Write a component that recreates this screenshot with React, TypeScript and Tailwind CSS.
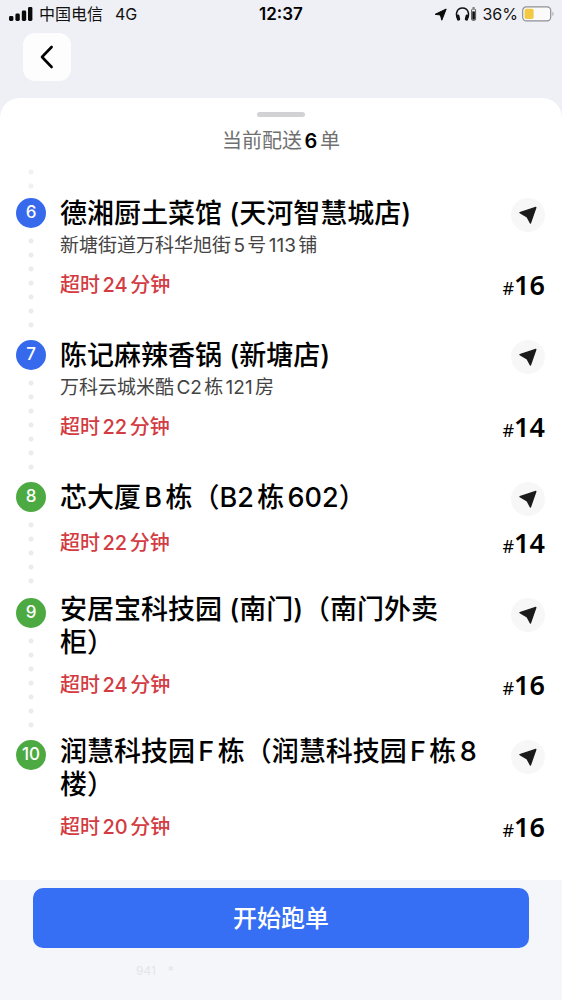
interface Stop {
    no: number;
    kind: 'pickup' | 'dropoff';
    title: string;
    address?: string;
    late: number;
    order: number;
}

const stops: Stop[] = [
    { no: 6, kind: 'pickup', title: '德湘厨土菜馆 (天河智慧城店)', address: '新塘街道万科华旭街5号113铺', late: 24, order: 16 },
    { no: 7, kind: 'pickup', title: '陈记麻辣香锅 (新塘店)', address: '万科云城米酷C2栋121房', late: 22, order: 14 },
    { no: 8, kind: 'dropoff', title: '芯大厦B栋（B2栋602）', late: 22, order: 14 },
    { no: 9, kind: 'dropoff', title: '安居宝科技园 (南门)（南门外卖柜）', late: 24, order: 16 },
    { no: 10, kind: 'dropoff', title: '润慧科技园F栋（润慧科技园F栋8楼）', late: 20, order: 16 },
];

function StatusBar() {
    return (
        <div className="grid grid-cols-3 items-center h-7 pl-2 pr-2 text-base leading-7 text-[#111]">
            <div className="flex items-center gap-1.5">
                <svg className="w-[25px] h-[14px]" viewBox="0 0 25 14" fill="#0a0a0a">
                    <rect x="1" y="9" width="4.4" height="5" rx="1.4" />
                    <rect x="7.4" y="6.5" width="4.4" height="7.5" rx="1.4" />
                    <rect x="13.8" y="3.5" width="4.4" height="10.5" rx="1.4" />
                    <rect x="20" y="0" width="4.4" height="14" rx="1.4" />
                </svg>
                <span>中国电信</span>
                <span className="ml-1.5">4G</span>
            </div>
            <div className="text-center text-[17px] font-semibold text-black">12:37</div>
            <div className="flex items-center justify-end">
                <svg className="w-[13px] h-[13px] mr-2 shrink-0" viewBox="0 0 13 13" fill="#0a0a0a" stroke="#0a0a0a" strokeWidth="1" strokeLinejoin="round">
                    <path d="M1.2 6.3 12.2 1 7.8 12.2 6.4 7Z" />
                </svg>
                <svg className="w-[23px] h-[14px] mr-1 shrink-0" viewBox="0 0 23 14" fill="none">
                    <path d="M3.2 12.2C.2 8.6 1 1 7.5 1s7.3 7.6 4.3 11.2" stroke="#111" strokeWidth="1.5" />
                    <rect x="1.6" y="7.6" width="3.2" height="6" rx="1.3" fill="#111" transform="rotate(-14 3.2 10.6)" />
                    <rect x="10.2" y="7.6" width="3.2" height="6" rx="1.3" fill="#111" transform="rotate(14 11.8 10.6)" />
                    <rect x="16.6" y="2.1" width="4" height="11.2" rx="1" stroke="#555" strokeWidth="1" />
                    <rect x="17.5" y="0.2" width="2.2" height="1.2" rx=".4" fill="#555" />
                    <rect x="17.3" y="4.4" width="2.6" height="8.2" fill="#111" />
                </svg>
                <span className="mr-1">36%</span>
                <svg className="w-8 h-4 shrink-0" viewBox="0 0 32 16">
                    <rect x=".7" y=".9" width="28" height="14" rx="3.6" fill="#fafafa" stroke="#8f9092" strokeWidth="1.2" />
                    <rect x="2.6" y="2.8" width="9" height="10.2" rx="1.8" fill="#f3c944" />
                    <path d="M30.6 5.8v4.4c1.2-.5 1.2-3.9 0-4.4Z" fill="#8f9092" />
                </svg>
            </div>
        </div>
    );
}

function StopRow({ stop, last }: { stop: Stop; last: boolean }) {
    return (
        <li className="flex gap-3.5">
            <div className="flex flex-col w-[30px] shrink-0">
                <span
                    className={`flex items-center justify-center h-[30px] mt-[5px] rounded-full text-[17px] font-medium text-white ${stop.kind === 'pickup' ? 'bg-[#3769ed]' : 'bg-[#4daa43]'}`}
                >
                    {stop.no}
                </span>
                {!last && (
                    <span className="flex-1 mt-1.5 bg-[radial-gradient(circle,#ebecee_2px,transparent_3px)] bg-[length:30px_14px] bg-repeat-y" />
                )}
            </div>
            <div className="flex-1 min-w-0 pb-9">
                <div className="flex items-start gap-6">
                    <div className="flex-1 min-w-0">
                        <div className="flex items-center min-h-10">
                            <h2 className="text-[27px] leading-[33px] font-medium text-black [text-spacing-trim:space-all]">{stop.title}</h2>
                        </div>
                        {stop.address && (
                            <p className="text-[19px] leading-[26px] text-[#444]">{stop.address}</p>
                        )}
                    </div>
                    <button
                        type="button"
                        aria-label="导航"
                        className="flex items-center justify-center size-[34px] mt-[5px] shrink-0 rounded-full bg-[#f7f7f8]"
                    >
                        <svg className="size-[18px]" viewBox="0 0 18 18" fill="#1b1b1b" stroke="#1b1b1b" strokeWidth="1.4" strokeLinejoin="round">
                            <path d="M1 6.6 16.8 1.4 11.4 17 8.2 11Z" />
                        </svg>
                    </button>
                </div>
                <div className="flex items-center justify-between h-7 mt-3">
                    <span className="text-xl leading-7 font-medium text-[#d23c42]">超时{stop.late}分钟</span>
                    <span className="flex items-baseline text-black font-['Noto_Sans','Noto_Sans_CJK_SC',sans-serif]">
                        <span className="text-lg">#</span>
                        <span className="text-[27px] leading-8 font-semibold">{stop.order}</span>
                    </span>
                </div>
            </div>
        </li>
    );
}

export default function App() {
    return (
        <div
            lang="zh-CN"
            className="flex flex-col min-h-screen bg-[#eff0f5] font-['Inter','Noto_Sans_CJK_SC',sans-serif] [text-autospace:normal]"
        >
            <StatusBar />
            <header className="px-[23px] pt-[5px] pb-[17px]">
                <button
                    type="button"
                    aria-label="返回"
                    className="flex items-center justify-center size-12 rounded-xl bg-[#fdfdfe]"
                >
                    <svg className="w-[14px] h-6" viewBox="0 0 14 24" fill="none" stroke="#000" strokeWidth="2.6" strokeLinecap="round" strokeLinejoin="round">
                        <path d="M11.6 2 2 12l9.6 10" />
                    </svg>
                </button>
            </header>

            <main className="flex-1 rounded-t-[20px] bg-white pt-3.5">
                <div className="w-12 h-[5px] mx-auto rounded-full bg-[#d2d2d4]" />
                <h1 className="mt-2.5 text-center text-xl leading-7 text-[#707070]">
                    当前配送<strong className="font-semibold text-black">6</strong>单
                </h1>
                <div className="w-[30px] h-7 ml-4 mt-2.5 bg-[radial-gradient(circle,#f0f1f3_2px,transparent_3px)] bg-[length:30px_14px] bg-repeat-y" />
                <ul className="pl-4 pr-[17px]">
                    {stops.map((stop, i) => (
                        <StopRow key={stop.no} stop={stop} last={i === stops.length - 1} />
                    ))}
                </ul>
            </main>

            <footer className="px-[33px] pt-2 pb-5 bg-[#f5f6f9]">
                <button
                    type="button"
                    className="block w-full h-[60px] pt-0.5 rounded-[10px] bg-[#366ff3] text-2xl font-medium text-white"
                >
                    开始跑单
                </button>
                <p className="flex gap-3 pl-[103px] pt-3.5 text-xs leading-[18px] text-[#e3e5e9]">
                    <span>941</span>
                    <span>*</span>
                </p>
            </footer>
        </div>
    );
}
